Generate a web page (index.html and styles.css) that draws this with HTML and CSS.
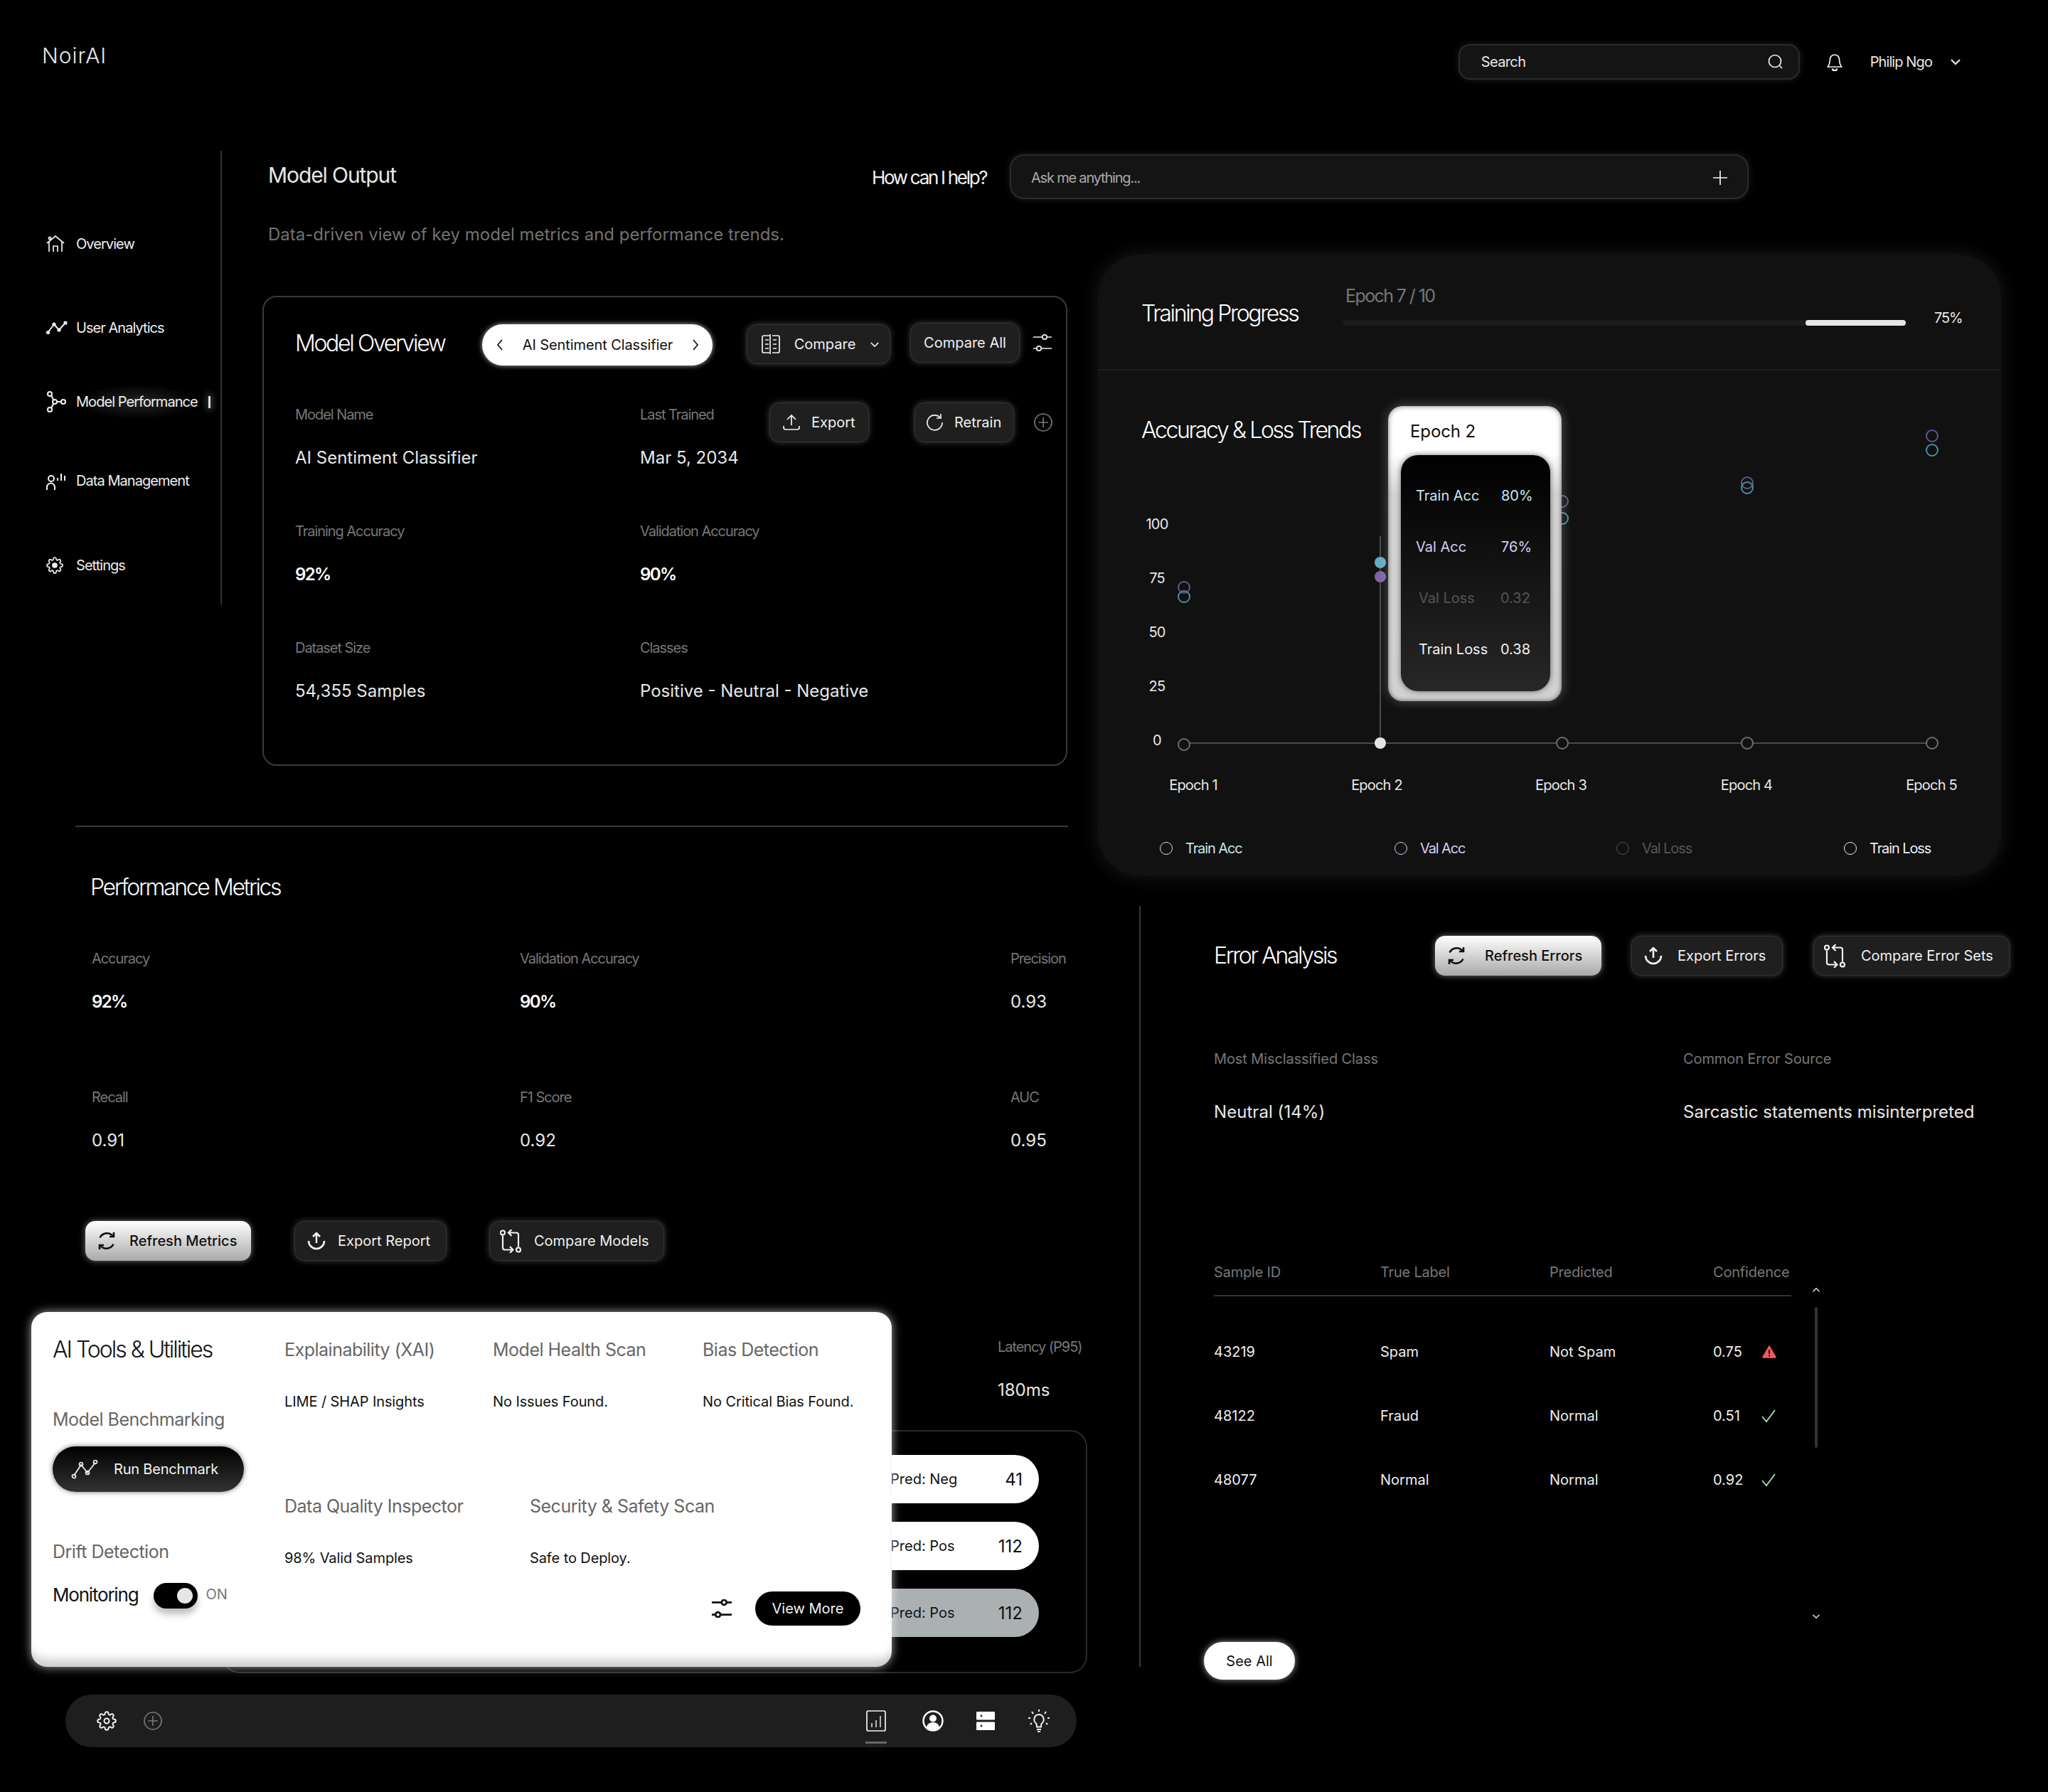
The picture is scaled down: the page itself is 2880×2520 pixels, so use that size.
FILE: index.html
```html
<!DOCTYPE html>
<html lang="en">
<head>
  <meta charset="UTF-8" />
  <title>NoirAI</title>
  <link rel="stylesheet" href="styles.css">
</head>
<body>

<svg class="sprite" xmlns="http://www.w3.org/2000/svg">
  <symbol id="i-gear" viewBox="0 0 24 24"><path d="M19.4 15a1.65 1.65 0 0 0 .33 1.82l.06.06a2 2 0 0 1 0 2.83 2 2 0 0 1-2.83 0l-.06-.06a1.65 1.65 0 0 0-1.82-.33 1.65 1.65 0 0 0-1 1.51V21a2 2 0 0 1-2 2 2 2 0 0 1-2-2v-.09A1.65 1.65 0 0 0 9 19.4a1.65 1.65 0 0 0-1.82.33l-.06.06a2 2 0 0 1-2.83 0 2 2 0 0 1 0-2.83l.06-.06a1.65 1.65 0 0 0 .33-1.82 1.65 1.65 0 0 0-1.51-1H3a2 2 0 0 1-2-2 2 2 0 0 1 2-2h.09A1.65 1.65 0 0 0 4.6 9a1.65 1.65 0 0 0-.33-1.82l-.06-.06a2 2 0 0 1 0-2.83 2 2 0 0 1 2.83 0l.06.06a1.65 1.65 0 0 0 1.82.33H9a1.65 1.65 0 0 0 1-1.51V3a2 2 0 0 1 2-2 2 2 0 0 1 2 2v.09a1.65 1.65 0 0 0 1 1.51 1.65 1.65 0 0 0 1.82-.33l.06-.06a2 2 0 0 1 2.83 0 2 2 0 0 1 0 2.83l-.06.06a1.65 1.65 0 0 0-.33 1.82V9a1.65 1.65 0 0 0 1.51 1H21a2 2 0 0 1 2 2 2 2 0 0 1-2 2h-.09a1.65 1.65 0 0 0-1.51 1z"/><circle cx="12" cy="12" r="3"/></symbol>
  <symbol id="i-sliders" viewBox="0 0 26 24"><path d="M0 4h13M19 4h7M0 20h5M11 20h15"/><circle cx="16" cy="4" r="3.2"/><circle cx="8" cy="20" r="3.2"/></symbol>
  <symbol id="i-plus-c" viewBox="0 0 26 26"><circle cx="13" cy="13" r="12"/><path d="M13 6v14M6 13h14"/></symbol>
  <symbol id="i-refresh" viewBox="0 0 28 28"><path d="M4.5 9.5A11 11 0 0 1 23 7.5M23.5 18.5A11 11 0 0 1 5 20.5"/><path d="M24 2v6h-6M4 26v-6h6"/></symbol>
  <symbol id="i-upload" viewBox="0 0 28 28"><path d="M14 17V3M9 8l5-5 5 5"/><path d="M3 14a11 11 0 0 0 22 0"/></symbol>
  <symbol id="i-swap" viewBox="0 0 30 32"><circle cx="4" cy="4" r="3"/><circle cx="26" cy="28" r="3"/><path d="M4 8v17a3 3 0 0 0 3 3h11M14 23.5l4.5 4.5-4.5 4.5"/><path d="M26 24V7a3 3 0 0 0-3-3H12M16.500 -.5L12 4l4.500 4.500"/></symbol>
  <symbol id="i-trend" viewBox="0 0 38 28"><path d="M4 23L14 8l9 11L34 5"/><circle cx="4" cy="24" r="2.5"/><circle cx="14" cy="7" r="2.5"/><circle cx="23" cy="19" r="2.5"/><circle cx="34" cy="4" r="2.5"/></symbol>
  <symbol id="i-down" viewBox="0 0 16 10"><path d="M2 2l6 6 6-6"/></symbol>
  <symbol id="i-check" viewBox="0 0 24 24"><path d="M3 13l6 7L21 4"/></symbol>
</svg>

<div class="page">

  <header class="topbar">
    <div class="logo">NoirAI</div>
    <div class="top-right">
      <div class="search">
        <span>Search</span>
        <svg class="ico" width="24" height="24" viewBox="0 0 24 24"><circle cx="11" cy="11" r="8.5"/><path d="M17.5 17.5L21 21"/></svg>
      </div>
      <svg class="ico bell" width="22" height="25" viewBox="0 0 22 25"><path d="M11 2a6.500 6.500 0 0 0-6.500 6.500c0 5.500-1.800 8.500-3 10.500h19c-1.200-2-3-5-3-10.500A6.500 6.500 0 0 0 11 2z"/><path d="M8 21.500a3 3 0 0 0 6 0" stroke-width="2.600"/></svg>
      <span class="user-name">Philip Ngo</span>
      <svg class="ico chev" width="16" height="10"><use href="#i-down"/></svg>
    </div>
  </header>

  <nav class="sidebar">
    <a class="nav-item">
      <span class="nav-ico"><svg class="ico" width="26" height="24" viewBox="0 0 26 24"><path d="M1 11L13 1l12 10"/><path d="M4 8v15M22 9v14M10 23v-8h6v8"/><circle cx="5" cy="4" r="1.6"/></svg></span>
      <span>Overview</span>
    </a>
    <a class="nav-item">
      <span class="nav-ico"><svg class="ico ico-bold" width="30" height="20" viewBox="0 0 30 20"><path d="M2 17L11 5l7 8L27 3"/><circle cx="2.500" cy="16.500" r="1.600"/><circle cx="11" cy="5" r="1.600"/><circle cx="18" cy="13" r="1.600"/><circle cx="27" cy="3" r="1.600"/></svg></span>
      <span>User Analytics</span>
    </a>
    <a class="nav-item active">
      <span class="nav-ico"><svg class="ico ico-bold" width="28" height="30" viewBox="0 0 28 30"><circle cx="5" cy="4" r="3"/><circle cx="5" cy="26" r="3"/><circle cx="12" cy="15" r="3"/><circle cx="24" cy="15" r="3"/><path d="M7 6l3 6M7 24l3-6M15 15h6"/></svg></span>
      <span class="nav-label">Model Performance</span>
      <i class="nav-mark"></i>
    </a>
    <a class="nav-item">
      <span class="nav-ico"><svg class="ico ico-bold" width="28" height="26" viewBox="0 0 28 26"><circle cx="7" cy="10" r="4"/><path d="M1 26v-4a5 5 0 0 1 11 0v4M16 9v4M21 3v10M26 6v7"/></svg></span>
      <span>Data Management</span>
    </a>
    <a class="nav-item">
      <span class="nav-ico"><svg class="ico" width="24" height="24"><use href="#i-gear"/><circle class="fill-dot" cx="12" cy="12" r="3"/></svg></span>
      <span>Settings</span>
    </a>
  </nav>

  <section class="output-head">
    <div class="output-row">
      <h2 class="output-title">Model Output</h2>
      <div class="help-label">How can I help?</div>
      <div class="ask">
        <span>Ask me anything...</span>
        <svg class="ico" width="22" height="22" viewBox="0 0 22 22"><path d="M11 1v20M1 11h20"/></svg>
      </div>
    </div>
    <p class="output-sub">Data-driven view of key model metrics and performance trends.</p>
  </section>

  <section class="model-card">
    <div class="model-top">
      <h3 class="card-title model-title">Model Overview</h3>
      <div class="picker">
        <svg class="ico-dark" width="10" height="18" viewBox="0 0 10 18"><path d="M8 2L2 9l6 7"/></svg>
        <span>AI Sentiment Classifier</span>
        <svg class="ico-dark" width="10" height="18" viewBox="0 0 10 18"><path d="M2 2l6 7-6 7"/></svg>
      </div>
      <button class="btn btn-compare">
        <svg class="ico" width="26" height="30" viewBox="0 0 26 30"><path d="M11 3H3a2 2 0 0 0-2 2v20a2 2 0 0 0 2 2h8M15 3h8a2 2 0 0 1 2 2v20a2 2 0 0 1-2 2h-8M12 1v28M5 9h5M5 15h5M5 21h5M16 9h5M16 15h5M16 21h5"/></svg>
        <span>Compare</span>
        <svg class="ico" width="14" height="9"><use href="#i-down"/></svg>
      </button>
      <button class="btn btn-all">Compare All</button>
      <svg class="ico sliders-top" width="26" height="24"><use href="#i-sliders"/></svg>
    </div>

    <div class="model-grid">
      <div class="stat">
        <div class="stat-label">Model Name</div>
        <div class="stat-value">AI Sentiment Classifier</div>
      </div>
      <div class="stat-actions">
        <div class="stat stat-short">
          <div class="stat-label">Last Trained</div>
          <div class="stat-value">Mar 5, 2034</div>
        </div>
        <button class="btn btn-sq">
          <svg class="ico" width="24" height="24" viewBox="0 0 24 24"><path d="M12 16V2M6 8l6-6 6 6M1 17v2a3 3 0 0 0 3 3h16a3 3 0 0 0 3-3v-2"/></svg>
          <span>Export</span>
        </button>
        <button class="btn btn-sq btn-retrain">
          <svg class="ico" width="24" height="24" viewBox="0 0 24 24"><path d="M20 5a10.500 10.500 0 1 0 3 7"/><path d="M21 0v6h-6"/></svg>
          <span>Retrain</span>
        </button>
        <svg class="ico ico-dim plus-round" width="26" height="26"><use href="#i-plus-c"/></svg>
      </div>
      <div class="stat">
        <div class="stat-label">Training Accuracy</div>
        <div class="stat-value strong">92%</div>
      </div>
      <div class="stat">
        <div class="stat-label">Validation Accuracy</div>
        <div class="stat-value strong">90%</div>
      </div>
      <div class="stat">
        <div class="stat-label">Dataset Size</div>
        <div class="stat-value">54,355 Samples</div>
      </div>
      <div class="stat">
        <div class="stat-label">Classes</div>
        <div class="stat-value">Positive - Neutral - Negative</div>
      </div>
    </div>
  </section>

  <section class="training">
    <div class="training-head">
      <h3 class="card-title training-title">Training Progress</h3>
      <div class="epoch-block">
        <div class="epoch-text">Epoch 7 / 10</div>
        <div class="bar"><div class="bar-fill"></div></div>
      </div>
      <div class="bar-pct">75%</div>
    </div>
    <div class="chart-body">
      <h3 class="card-title chart-title">Accuracy &amp; Loss Trends</h3>
      <svg class="chart" width="1270" height="530" viewBox="1544 600 1270 530">
        <text x="1627" y="744">100</text>
        <text x="1627" y="820">75</text>
        <text x="1627" y="896">50</text>
        <text x="1627" y="972">25</text>
        <text x="1627" y="1048">0</text>
        <line class="axis" x1="1665" y1="1045" x2="2717" y2="1045"/>
        <line class="axis" x1="1941" y1="754" x2="1941" y2="1045"/>
        <g class="pt-axis">
          <circle cx="1665" cy="1047" r="8"/>
          <circle cx="2197" cy="1045" r="8"/>
          <circle cx="2457" cy="1045" r="8"/>
          <circle cx="2717" cy="1045" r="8"/>
        </g>
        <circle class="pt-now" cx="1941" cy="1045" r="8"/>
        <g class="pt-val">
          <circle cx="1665" cy="826" r="8"/>
          <circle cx="2197" cy="705" r="8"/>
          <circle cx="2457" cy="679" r="8"/>
          <circle cx="2717" cy="613" r="8"/>
        </g>
        <g class="pt-train">
          <circle cx="1665" cy="839" r="8"/>
          <circle cx="2197" cy="729" r="8"/>
          <circle cx="2457" cy="686" r="8"/>
          <circle cx="2717" cy="633" r="8"/>
        </g>
        <circle cx="1941" cy="791" r="8" fill="#62abc2"/>
        <circle cx="1941" cy="811" r="8" fill="#7b64a2"/>
        <text x="1678" y="1111">Epoch 1</text>
        <text x="1936" y="1111">Epoch 2</text>
        <text x="2195" y="1111">Epoch 3</text>
        <text x="2456" y="1111">Epoch 4</text>
        <text x="2716" y="1111">Epoch 5</text>
      </svg>
      <div class="legend">
        <span class="leg leg-train">Train Acc</span>
        <span class="leg leg-val">Val Acc</span>
        <span class="leg leg-loss">Val Loss</span>
        <span class="leg leg-tl">Train Loss</span>
      </div>
      <div class="tooltip">
        <div class="tip-title">Epoch 2</div>
        <div class="tip-inner">
          <div class="tip-row tip-train"><span>Train Acc</span><span>80%</span></div>
          <div class="tip-row tip-val"><span>Val Acc</span><span>76%</span></div>
          <div class="tip-row tip-loss"><span>Val Loss</span><span>0.32</span></div>
          <div class="tip-row tip-tl"><span>Train Loss</span><span>0.38</span></div>
        </div>
      </div>
    </div>
  </section>

  <div class="divider"></div>

  <section class="left-low">
    <h3 class="card-title perf-title">Performance Metrics</h3>
    <div class="perf-grid">
      <div class="stat"><div class="stat-label">Accuracy</div><div class="stat-value strong">92%</div></div>
      <div class="stat"><div class="stat-label">Validation Accuracy</div><div class="stat-value strong">90%</div></div>
      <div class="stat"><div class="stat-label">Precision</div><div class="stat-value">0.93</div></div>
      <div class="stat"><div class="stat-label">Recall</div><div class="stat-value">0.91</div></div>
      <div class="stat"><div class="stat-label">F1 Score</div><div class="stat-value">0.92</div></div>
      <div class="stat"><div class="stat-label">AUC</div><div class="stat-value">0.95</div></div>
    </div>
    <div class="perf-actions">
      <button class="btn btn-light b-refresh"><svg class="ico-dark bold" width="28" height="28"><use href="#i-refresh"/></svg><span>Refresh Metrics</span></button>
      <button class="btn b-export"><svg class="ico bold" width="28" height="28"><use href="#i-upload"/></svg><span>Export Report</span></button>
      <button class="btn b-compare"><svg class="ico swap" width="30" height="33"><use href="#i-swap"/></svg><span>Compare Models</span></button>
    </div>

    <div class="stat latency"><div class="stat-label">Latency (P95)</div><div class="stat-value">180ms</div></div>

    <div class="pred-card">
      <div class="pred"><span>Pred: Neg</span><b>41</b></div>
      <div class="pred"><span>Pred: Pos</span><b>112</b></div>
      <div class="pred pred-grey"><span>Pred: Pos</span><b>112</b></div>
    </div>

    <div class="dock">
      <svg class="ico" width="28" height="28"><use href="#i-gear"/></svg>
      <svg class="ico ico-dim dock-plus" width="26" height="26"><use href="#i-plus-c"/></svg>
      <div class="dock-right">
        <span class="dock-active">
          <svg class="ico" width="28" height="30" viewBox="0 0 28 30"><rect x="1" y="1" width="26" height="28" rx="2"/><path d="M8 24v-6M14 24v-10M20 24V8" stroke-width="1.400"/></svg>
        </span>
        <svg width="30" height="30" viewBox="0 0 30 30"><circle cx="15" cy="15" r="13.500" fill="none" stroke="#fff" stroke-width="2.400"/><circle cx="15" cy="11.500" r="5" fill="#fff"/><path d="M6 24a9 7 0 0 1 18 0 13 13 0 0 1-18 0z" fill="#fff"/></svg>
        <svg width="26" height="26" viewBox="0 0 26 26"><rect x="0" y="0" width="26" height="11.500" rx="1" fill="#fff"/><rect x="0" y="14.500" width="26" height="11.500" rx="1" fill="#fff"/><circle cx="7" cy="6" r="1.400" fill="#1e1e1e"/><circle cx="7" cy="20" r="1.400" fill="#1e1e1e"/></svg>
        <svg class="ico bulb" width="32" height="34" viewBox="0 0 32 34"><path d="M16 8a7 7 0 0 0-4 12.500c1 1 1 3 1 5h6c0-2 0-4 1-5A7 7 0 0 0 16 8z"/><path d="M13 29h6M14 32h4M16 1v3M6 4l2 3M26 4l-2 3M1 13h3M31 13h-3M4 22l2-2M28 22l-2-2"/></svg>
      </div>
    </div>

    <div class="tools">
      <div class="tools-left">
        <h3 class="card-title tools-title">AI Tools &amp; Utilities</h3>
        <div class="tool-head bench-head">Model Benchmarking</div>
        <button class="run-btn">
          <svg class="ico" width="38" height="28"><use href="#i-trend"/></svg>
          <span>Run Benchmark</span>
        </button>
        <div class="tool-head drift-head">Drift Detection</div>
        <div class="monitor">
          <span class="monitor-label">Monitoring</span>
          <span class="toggle"><i></i></span>
          <span class="toggle-state">ON</span>
        </div>
      </div>
      <div class="tools-right">
        <div class="tool-row tool-row-a">
          <div class="tool"><div class="tool-head">Explainability (XAI)</div><div class="tool-value">LIME / SHAP Insights</div></div>
          <div class="tool"><div class="tool-head">Model Health Scan</div><div class="tool-value">No Issues Found.</div></div>
          <div class="tool"><div class="tool-head">Bias Detection</div><div class="tool-value">No Critical Bias Found.</div></div>
        </div>
        <div class="tool-row tool-row-b">
          <div class="tool"><div class="tool-head">Data Quality Inspector</div><div class="tool-value">98% Valid Samples</div></div>
          <div class="tool"><div class="tool-head">Security &amp; Safety Scan</div><div class="tool-value">Safe to Deploy.</div></div>
        </div>
        <div class="tools-foot">
          <svg class="ico-dark bold" width="28" height="26"><use href="#i-sliders"/></svg>
          <button class="view-more">View More</button>
        </div>
      </div>
    </div>
  </section>

  <section class="errors">
    <div class="errors-head">
      <h3 class="card-title errors-title">Error Analysis</h3>
      <button class="btn btn-light be-refresh"><svg class="ico-dark bold" width="28" height="28"><use href="#i-refresh"/></svg><span>Refresh Errors</span></button>
      <button class="btn be-export"><svg class="ico bold" width="28" height="28"><use href="#i-upload"/></svg><span>Export Errors</span></button>
      <button class="btn be-compare"><svg class="ico swap" width="30" height="33"><use href="#i-swap"/></svg><span>Compare Error Sets</span></button>
    </div>
    <div class="errors-facts">
      <div class="fact"><div class="fact-label">Most Misclassified Class</div><div class="fact-value">Neutral (14%)</div></div>
      <div class="fact"><div class="fact-label">Common Error Source</div><div class="fact-value">Sarcastic statements misinterpreted</div></div>
    </div>
    <div class="table-wrap">
      <div class="table">
        <div class="t-row t-head"><span>Sample ID</span><span>True Label</span><span>Predicted</span><span>Confidence</span></div>
        <div class="t-row"><span>43219</span><span>Spam</span><span>Not Spam</span>
          <span class="t-conf">0.75<svg width="22" height="20" viewBox="0 0 24 22"><path d="M12 2L22 19a1 1 0 0 1-1 1H3a1 1 0 0 1-1-1z" fill="#f0595c" stroke="#f0595c" stroke-width="1.500" stroke-linejoin="round"/><path d="M12 8v6M12 16v2" stroke="#000" stroke-width="2"/></svg></span></div>
        <div class="t-row"><span>48122</span><span>Fraud</span><span>Normal</span>
          <span class="t-conf">0.51<svg class="ok" width="24" height="24"><use href="#i-check"/></svg></span></div>
        <div class="t-row"><span>48077</span><span>Normal</span><span>Normal</span>
          <span class="t-conf">0.92<svg class="ok" width="24" height="24"><use href="#i-check"/></svg></span></div>
      </div>
      <div class="scroll">
        <svg class="ico scroll-up" width="12" height="8" viewBox="0 0 16 10"><path d="M2 8l6-6 6 6"/></svg>
        <div class="scroll-thumb"></div>
        <svg class="ico scroll-down" width="12" height="8"><use href="#i-down"/></svg>
      </div>
    </div>
    <button class="see-all">See All</button>
  </section>

</div>

</body>
</html>
```
FILE: styles.css
```css
* {
  box-sizing: border-box;
}

body {
  margin: 0;
  background: #000;
  color: #e8e8e8;
  font-family: "Inter", "Noto Sans", sans-serif;
  font-size: 20px;
}

h2, h3, p {
  margin: 0;
  font-weight: 400;
}

button {
  font-family: inherit;
  border: none;
  cursor: pointer;
}

.sprite {
  display: none;
}

.ico {
  fill: none;
  stroke: #f2f2f2;
  stroke-width: 1.7;
  flex: none;
}

.ico-bold {
  stroke-width: 2;
}

.ico-dim {
  stroke: #777;
}

.ico-dark {
  fill: none;
  stroke: #111;
  stroke-width: 1.7;
  flex: none;
}

.bold {
  stroke-width: 2.6;
}

.swap {
  stroke-width: 2.2;
}

.bulb {
  stroke-width: 2;
}

.fill-dot {
  fill: #f2f2f2;
  stroke: none;
}

.page {
  width: 2880px;
  height: 2520px;
  display: grid;
  grid-template-columns: 310px 1234px 1336px;
  grid-template-rows: 212px 146px 803px 71px 1fr;
  overflow: hidden;
}

/* top bar */
.topbar {
  grid-column: 1 / -1;
  grid-row: 1;
  display: flex;
  justify-content: space-between;
  align-items: flex-start;
  padding: 60px 122px 0 59px;
}

.logo {
  font-size: 30px;
  line-height: 36px;
  font-weight: 300;
  letter-spacing: 1px;
}

.top-right {
  display: flex;
  align-items: center;
  height: 50px;
  margin-top: 2px;
}

.search {
  width: 480px;
  height: 50px;
  border: 2px solid #2a2a2a;
  border-radius: 16px;
  background: #141414;
  box-shadow: 0 0 10px rgba(255, 255, 255, 0.12);
  display: flex;
  justify-content: space-between;
  align-items: center;
  padding: 0 20px 0 30px;
  font-size: 20px;
  letter-spacing: -0.6px;
}

.bell {
  margin-left: 38px;
}

.user-name {
  margin-left: 39px;
  letter-spacing: -0.9px;
}

.chev {
  margin-left: 25px;
  stroke-width: 2;
}

/* sidebar */
.sidebar {
  grid-column: 1;
  grid-row: 2 / 4;
  width: 312px;
  height: 638px;
  border-right: 2px solid #333;
  padding: 111px 0 0 64px;
}

.nav-item {
  display: flex;
  align-items: center;
  height: 40px;
  color: #eee;
  font-size: 20px;
  letter-spacing: -0.95px;
}

.nav-item:nth-child(2) {
  margin-top: 78px;
}

.nav-item:nth-child(3) {
  margin-top: 64px;
}

.nav-item:nth-child(4) {
  margin-top: 71px;
}

.nav-item:nth-child(5) {
  margin-top: 79px;
}

.nav-ico {
  width: 43px;
  display: flex;
  padding-left: 1px;
}

.nav-label {
  padding: 12px 0;
  background: radial-gradient(ellipse at center, rgba(255, 255, 255, 0.14), transparent 72%);
}

.nav-mark {
  width: 3px;
  height: 17px;
  margin-left: 15px;
  background: #ddd;
  box-shadow: 0 0 8px 3px rgba(255, 255, 255, 0.22);
}

/* model output header */
.output-head {
  grid-column: 2 / -1;
  grid-row: 2;
  padding-left: 67px;
}

.output-row {
  display: flex;
  align-items: flex-start;
  height: 68px;
}

.output-title {
  width: 849px;
  margin-top: 16px;
  font-size: 30px;
  line-height: 36px;
  letter-spacing: -1.1px;
}

.help-label {
  width: 194px;
  margin-top: 20px;
  font-size: 26px;
  line-height: 36px;
  letter-spacing: -2.3px;
  color: #f2f2f2;
}

.ask {
  width: 1039px;
  height: 63px;
  margin-top: 5px;
  border: 2px solid #2a2a2a;
  border-radius: 20px;
  background: #141414;
  box-shadow: 0 0 10px rgba(255, 255, 255, 0.12);
  display: flex;
  justify-content: space-between;
  align-items: center;
  padding: 2px 27px 0 28px;
  font-size: 20px;
  letter-spacing: -1.2px;
  color: #aaa;
}

.output-sub {
  margin-top: 32px;
  font-size: 24px;
  line-height: 36px;
  color: #727272;
}

/* shared buttons */
.btn {
  display: flex;
  align-items: center;
  height: 56px;
  background: #1f1f1f;
  border: 1px solid #333;
  border-radius: 14px;
  box-shadow: 0 0 8px rgba(255, 255, 255, 0.25);
  color: #f0f0f0;
  font-size: 20px;
}

.btn-light {
  background: linear-gradient(#fff, #a9a9a9);
  border: none;
  box-shadow: 0 0 9px rgba(255, 255, 255, 0.45);
  color: #111;
  font-weight: 500;
}

.card-title {
  font-size: 32px;
  line-height: 36px;
  font-weight: 300;
  letter-spacing: -2.35px;
  color: #fff;
}

/* model overview card */
.model-card {
  grid-column: 2;
  grid-row: 3;
  margin: 58px 0 0 59px;
  width: 1132px;
  height: 661px;
  border: 2px solid #3a3a3a;
  border-radius: 20px;
  padding: 36px 0 0 44px;
}

.model-top {
  display: flex;
  align-items: flex-start;
  height: 60px;
}

.model-title {
  width: 263px;
  margin-top: 11px;
}

.picker {
  width: 324px;
  height: 58px;
  margin-top: 2px;
  border-radius: 29px;
  background: #fff;
  box-shadow: 0 0 7px rgba(255, 255, 255, 0.7);
  color: #111;
  display: flex;
  justify-content: space-between;
  align-items: center;
  padding: 0 19px 0 20px;
  letter-spacing: -0.1px;
}

.btn-compare {
  width: 202px;
  margin: 2px 0 0 48px;
  padding: 0 14px 0 20px;
  justify-content: space-between;
}

.btn-all {
  width: 154px;
  margin-left: 28px;
  justify-content: center;
}

.sliders-top {
  margin: 16px 0 0 19px;
}

.model-grid {
  display: grid;
  grid-template-columns: 485px 1fr;
  row-gap: 73px;
  margin-top: 55px;
}

.stat-label {
  font-size: 20px;
  line-height: 28px;
  letter-spacing: -1.05px;
  color: #777;
}

.stat-value {
  margin-top: 31px;
  font-size: 24px;
  line-height: 32px;
  color: #e8e8e8;
}

.stat-value.strong {
  font-weight: 600;
  letter-spacing: -1.6px;
  color: #fff;
}

.stat-actions {
  display: flex;
  align-items: flex-start;
}

.stat-short {
  width: 182px;
}

.btn-sq {
  width: 140px;
  margin-top: -3px;
  padding-left: 18px;
  gap: 16px;
}

.btn-retrain {
  margin-left: 64px;
  padding-left: 15px;
  gap: 16px;
}

.plus-round {
  margin: 12px 0 0 28px;
}

/* training */
.training {
  grid-column: 3;
  grid-row: 3 / 5;
  width: 1270px;
  height: 874px;
  border-radius: 60px;
  background: #111;
  box-shadow: 0 0 26px rgba(255, 255, 255, 0.1);
}

.training-head {
  height: 163px;
  border-bottom: 2px solid #1d1d1d;
  display: flex;
  align-items: flex-start;
  padding-left: 61px;
}

.training-title {
  width: 283px;
  margin-top: 65px;
}

.epoch-block {
  width: 792px;
  margin-top: 40px;
}

.epoch-text {
  padding-left: 4px;
  font-size: 25px;
  line-height: 36px;
  letter-spacing: -1.6px;
  color: #777;
}

.bar {
  display: flex;
  justify-content: flex-end;
  height: 8px;
  margin-top: 16px;
  border-radius: 4px;
  background: #1c1c1c;
}

.bar-fill {
  width: 141px;
  border-radius: 4px;
  background: #e6e6e6;
}

.bar-pct {
  margin: 75px 0 0 40px;
  line-height: 28px;
  letter-spacing: -1.2px;
}

.chart-body {
  position: relative;
}

.chart-title {
  padding: 66px 0 0 61px;
  margin-bottom: -23px;
}

.chart {
  display: block;
  overflow: visible;
}

.chart text {
  fill: #e8e8e8;
  font-size: 20px;
  letter-spacing: -0.8px;
  text-anchor: middle;
}

.axis {
  stroke: #4a4a4a;
  stroke-width: 2;
}

.pt-axis circle {
  fill: #111;
  stroke: #6e6e6e;
  stroke-width: 2;
}

.pt-now {
  fill: #e4e4e4;
}

.pt-val circle {
  fill: none;
  stroke: #63558a;
  stroke-width: 2;
}

.pt-train circle {
  fill: none;
  stroke: #4c8ea3;
  stroke-width: 2;
}

.legend {
  display: grid;
  grid-template-columns: 330px 312px 320px auto;
  margin-top: 45px;
  padding-left: 87px;
  line-height: 36px;
  letter-spacing: -1.1px;
}

.leg {
  display: flex;
  align-items: center;
  gap: 18px;
}

.leg::before {
  content: "";
  width: 16px;
  height: 16px;
  border-radius: 50%;
  border: 1.5px solid currentColor;
}

.leg-train {
  color: #c6e6f0;
}

.leg-val {
  color: #d7ccf2;
}

.leg-loss {
  color: #555;
}

.leg-tl {
  color: #eee;
}

/* tooltip sits over the chart */
.tooltip {
  position: absolute;
  left: 408px;
  top: 50px;
  width: 244px;
  height: 415px;
  border-radius: 20px;
  background: linear-gradient(#fff 0, #fff 16%, #d6d6d6 30%, #d2d2d2 100%);
  box-shadow: inset 0 0 7px rgba(0, 0, 0, 0.55), 0 0 16px rgba(255, 255, 255, 0.28);
  padding: 18px 16px 0 18px;
}

.tip-title {
  padding-left: 13px;
  font-size: 24px;
  line-height: 36px;
  letter-spacing: -0.1px;
  color: #111;
}

.tip-inner {
  height: 332px;
  margin-top: 15px;
  padding-top: 21px;
  border-radius: 24px;
  background: linear-gradient(#000, #272727);
  box-shadow: 0 0 8px rgba(0, 0, 0, 0.55);
}

.tip-row {
  display: flex;
  height: 72px;
  padding-left: 21px;
  font-size: 20px;
  letter-spacing: 0;
}

.tip-row span:first-child {
  width: 120px;
}

.tip-row span {
  line-height: 72px;
}

.tip-train {
  color: #c6e6f0;
}

.tip-val {
  color: #d7ccf2;
}

.tip-loss {
  color: #555;
}

.tip-tl {
  color: #f2f2f2;
}

.tip-loss,
.tip-tl {
  padding-left: 25px;
}

.tip-loss span:first-child,
.tip-tl span:first-child {
  width: 115px;
}

/* divider over left column */
.divider {
  grid-column: 1 / 3;
  grid-row: 4;
  align-self: start;
  margin-left: 106px;
  width: 1396px;
  height: 2px;
  background: #3a3a3a;
}

/* lower left */
.left-low {
  grid-column: 1 / 3;
  grid-row: 5;
  position: relative;
}

.perf-title {
  padding-left: 127px;
  line-height: 32px;
}

.perf-grid {
  display: grid;
  grid-template-columns: 602px 690px auto;
  row-gap: 104px;
  margin-top: 70px;
  padding-left: 129px;
}

.perf-actions {
  display: flex;
  margin: 97px 0 0 120px;
}

.b-refresh {
  width: 233px;
  padding-left: 16px;
  gap: 18px;
}

.b-export {
  width: 214px;
  margin-left: 61px;
  padding-left: 16px;
  gap: 16px;
}

.b-compare {
  width: 246px;
  margin-left: 60px;
  padding-left: 14px;
  gap: 18px;
}

.latency {
  margin: 107px 0 0 1403px;
}

.pred-card {
  width: 1216px;
  height: 342px;
  margin: 40px 0 0 313px;
  border: 2px solid #2a2a2a;
  border-radius: 24px;
  padding: 33px 66px 0 0;
  display: flex;
  flex-direction: column;
  align-items: flex-end;
  gap: 26px;
}

.pred {
  width: 301px;
  height: 68px;
  border-radius: 34px;
  background: #fff;
  color: #111;
  display: flex;
  justify-content: space-between;
  align-items: center;
  padding: 0 23px 0 92px;
}

.pred b {
  font-weight: 400;
  font-size: 24px;
}

.pred-grey {
  background: #abb1b3;
}

.dock {
  width: 1422px;
  height: 74px;
  margin: 30px 0 0 92px;
  border-radius: 37px;
  background: #1e1e1e;
  display: flex;
  align-items: center;
  padding: 0 37px 0 44px;
}

.dock-plus {
  margin-left: 38px;
}

.dock-right {
  margin-left: auto;
  display: flex;
  align-items: center;
  gap: 46px;
}

.dock-active {
  position: relative;
  display: flex;
  margin-right: 5px;
}

.dock-active::after {
  content: "";
  position: absolute;
  left: -1px;
  bottom: -17px;
  width: 30px;
  height: 3px;
  background: #666;
  box-shadow: 0 8px 10px rgba(255, 255, 255, 0.08);
}

/* floating white card over the lower left */
.tools {
  position: absolute;
  left: 44px;
  top: 613px;
  width: 1210px;
  height: 499px;
  border-radius: 22px;
  background: #fff;
  color: #111;
  box-shadow: 0 0 14px rgba(255, 255, 255, 0.65), inset 0 -18px 14px -8px rgba(0, 0, 0, 0.2);
  display: flex;
  padding: 35px 0 0 30px;
}

.tools-left {
  width: 326px;
}

.tools-title {
  color: #111;
  letter-spacing: -2px;
}

.tool-head {
  font-size: 25px;
  line-height: 32px;
  letter-spacing: -0.5px;
  color: #666;
}

.bench-head {
  margin-top: 64px;
}

.run-btn {
  display: flex;
  align-items: center;
  gap: 22px;
  width: 269px;
  height: 64px;
  margin-top: 22px;
  padding-left: 26px;
  border-radius: 32px;
  background: linear-gradient(#000, #333);
  box-shadow: 0 0 7px rgba(0, 0, 0, 0.55);
  color: #f2f2f2;
  font-size: 20px;
  letter-spacing: -0.2px;
}

.drift-head {
  margin-top: 68px;
}

.monitor {
  display: flex;
  align-items: center;
  height: 36px;
  margin-top: 26px;
}

.monitor-label {
  font-size: 26px;
  letter-spacing: -1.2px;
}

.toggle {
  display: flex;
  align-items: center;
  justify-content: flex-end;
  width: 62px;
  height: 36px;
  margin: 4px 0 0 22px;
  padding-right: 7px;
  border-radius: 18px;
  background: #000;
  box-shadow: 0 8px 10px rgba(0, 0, 0, 0.25);
}

.toggle i {
  width: 22px;
  height: 22px;
  border-radius: 50%;
  background: #e6e6e6;
}

.toggle-state {
  margin-left: 11px;
  color: #777;
}

.tool-row {
  display: grid;
}

.tool-row-a {
  grid-template-columns: 293px 295px auto;
  margin-top: 2px;
  height: 220px;
}

.tool-row-b {
  grid-template-columns: 345px auto;
}

.tool-value {
  margin-top: 43px;
  font-size: 20px;
  line-height: 28px;
  letter-spacing: -0.1px;
  color: #111;
}

.tools-foot {
  display: flex;
  align-items: center;
  justify-content: flex-end;
  gap: 33px;
  width: 810px;
  margin-top: 33px;
}

.view-more {
  width: 148px;
  height: 48px;
  border-radius: 24px;
  background: #000;
  color: #f2f2f2;
  font-size: 20px;
}

/* error analysis */
.errors {
  grid-column: 3;
  grid-row: 5;
  margin: 42px 0 0 58px;
  width: 1260px;
  height: 1070px;
  border-left: 2px solid #3a3a3a;
  padding: 42px 0 0 103px;
}

.errors-head {
  display: flex;
  align-items: center;
}

.errors-title {
  width: 311px;
}

.be-refresh {
  width: 234px;
  padding-left: 16px;
  gap: 26px;
}

.be-export {
  width: 213px;
  margin-left: 42px;
  padding-left: 16px;
  gap: 20px;
}

.be-compare {
  width: 276px;
  margin-left: 43px;
  padding-left: 14px;
  gap: 22px;
}

.errors-facts {
  display: grid;
  grid-template-columns: 660px auto;
  margin-top: 103px;
}

.fact-label {
  line-height: 28px;
  letter-spacing: -0.1px;
  color: #777;
}

.fact-value {
  margin-top: 45px;
  font-size: 24px;
  line-height: 32px;
  letter-spacing: 0.05px;
}

.table-wrap {
  display: flex;
  height: 504px;
  margin-top: 195px;
}

.table {
  width: 812px;
}

.t-row {
  display: grid;
  grid-template-columns: 234px 238px 230px 110px;
  align-items: center;
  height: 90px;
  letter-spacing: 0;
  color: #eee;
}

.t-head {
  height: 48px;
  align-items: start;
  line-height: 28px;
  margin-bottom: 33px;
  border-bottom: 2px solid #333;
  letter-spacing: -0.2px;
  color: #777;
}

.t-conf {
  display: flex;
  align-items: center;
}

.t-conf svg {
  margin-left: auto;
  margin-right: 20px;
}

.ok {
  fill: none;
  stroke: #a6e6a6;
  stroke-width: 1.8;
}

.scroll {
  width: 16px;
  margin: 35px 0 0 27px;
  display: flex;
  flex-direction: column;
  align-items: center;
}

.scroll-thumb {
  width: 4px;
  height: 198px;
  margin-top: 20px;
  border-radius: 2px;
  background: #333;
}

.scroll-down {
  margin-top: 233px;
}

.see-all {
  display: block;
  width: 128px;
  height: 53px;
  margin: 30px 0 0 -14px;
  border-radius: 27px;
  background: #fff;
  box-shadow: 0 0 10px rgba(255, 255, 255, 0.6);
  color: #111;
  font-size: 20px;
}
```
